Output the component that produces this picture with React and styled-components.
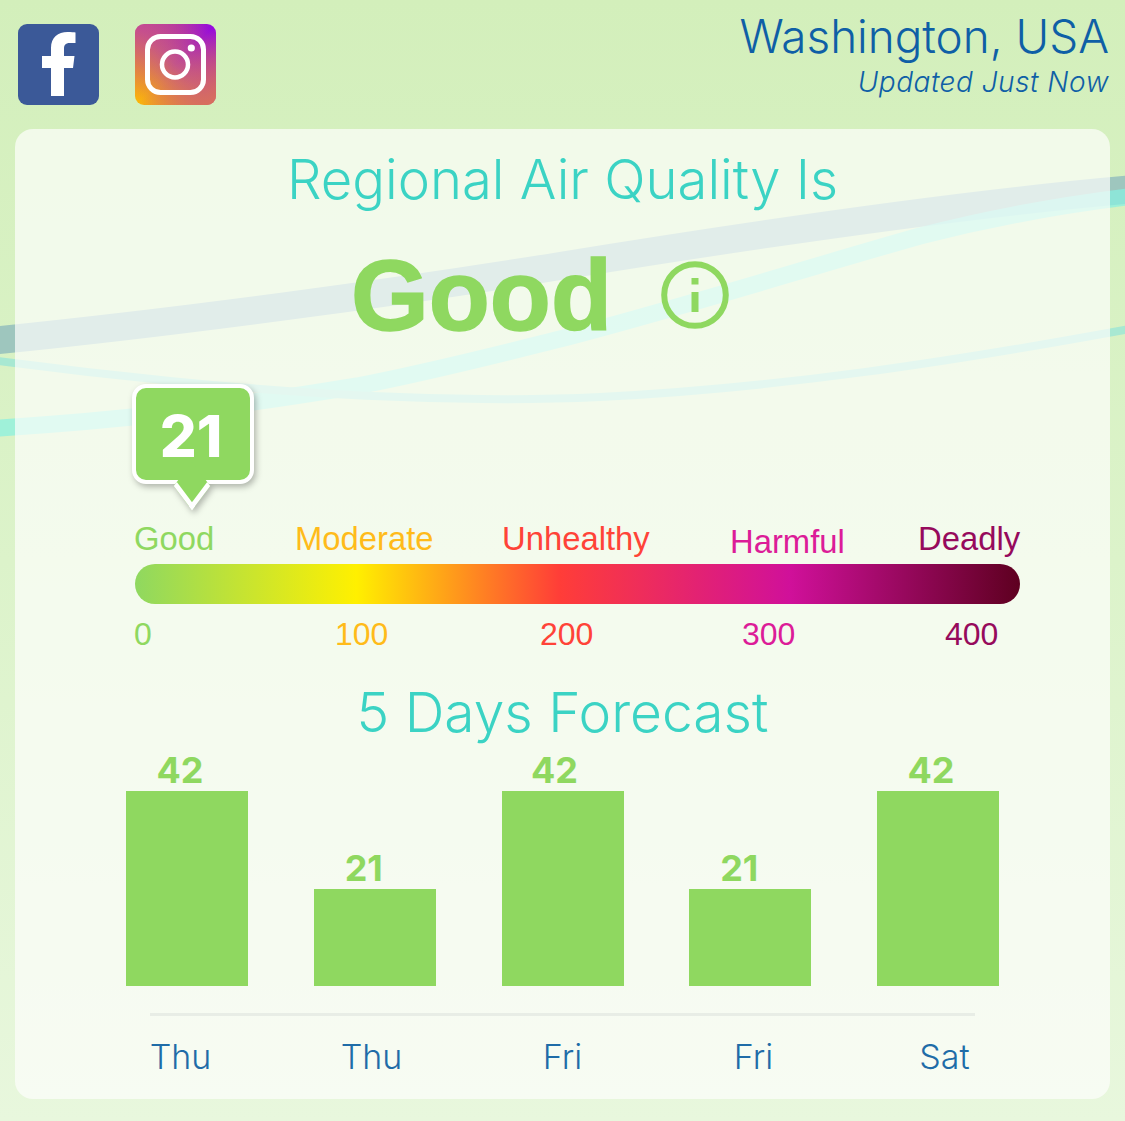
import React from 'react';
import styled, { createGlobalStyle } from 'styled-components';

const GlobalStyle = createGlobalStyle`
  html, body {
    margin: 0;
    padding: 0;
  }
  body {
    font-family: "Liberation Sans", Arial, sans-serif;
  }
`;

const scale = [
  { label: 'Good', color: '#8fd860', width: 161, drop: 0 },
  { label: 'Moderate', color: '#ffbb1a', width: 207, drop: 0 },
  { label: 'Unhealthy', color: '#ff4338', width: 228, drop: 0 },
  { label: 'Harmful', color: '#dc1c98', width: 188, drop: 3 },
  { label: 'Deadly', color: '#960a5c', width: 102, drop: 0 },
];

const ticks = [
  { label: '0', color: '#8fd860', width: 201 },
  { label: '100', color: '#ffbb1a', width: 205 },
  { label: '200', color: '#ff4338', width: 202 },
  { label: '300', color: '#dc1c98', width: 203 },
  { label: '400', color: '#960a5c', width: 60 },
];

const forecast = [
  { day: 'Thu', value: 42, shift: -7 },
  { day: 'Thu', value: 21, shift: -11 },
  { day: 'Fri', value: 42, shift: -8 },
  { day: 'Fri', value: 21, shift: -11 },
  { day: 'Sat', value: 42, shift: -7 },
];

const FacebookIcon = () => (
  <svg width="81" height="81" viewBox="0 0 81 81">
    <rect width="81" height="81" rx="9" fill="#3b5998" />
    <path
      d="M46 72V44H55L56.5 32H46V25C46 21.5 47 19 52 19H57.5V8.5C56.5 8.3 53 8 49.5 8C40 8 33 13.5 33 24V32H24V44H33V72Z"
      fill="#fff"
    />
  </svg>
);

const InstagramIcon = () => (
  <svg width="81" height="81" viewBox="0 0 81 81">
    <defs>
      <linearGradient id="igBase" x1="0" y1="1" x2="1" y2="0">
        <stop offset="0" stopColor="#ffbe00" />
        <stop offset="0.25" stopColor="#e58a3c" />
        <stop offset="0.5" stopColor="#c4558a" />
        <stop offset="0.75" stopColor="#ae2fae" />
        <stop offset="1" stopColor="#9000ea" />
      </linearGradient>
      <linearGradient id="igTint" x1="1" y1="1" x2="0" y2="0">
        <stop offset="0" stopColor="#d9705a" />
        <stop offset="0.5" stopColor="#d9705a" stopOpacity="0" />
        <stop offset="1" stopColor="#c4409c" stopOpacity="0.6" />
      </linearGradient>
    </defs>
    <rect width="81" height="81" rx="9" fill="url(#igBase)" />
    <rect width="81" height="81" rx="9" fill="url(#igTint)" />
    <rect x="12.5" y="12.5" width="56" height="56" rx="13" fill="none" stroke="#fff" strokeWidth="5" />
    <circle cx="40" cy="40.5" r="13" fill="none" stroke="#fff" strokeWidth="4.5" />
    <circle cx="56.3" cy="24" r="3.6" fill="#fff" />
  </svg>
);

const InfoIcon = () => (
  <svg width="68" height="68" viewBox="0 0 68 68">
    <circle cx="34" cy="34" r="30.8" fill="none" stroke="#8fd860" strokeWidth="6" />
    <rect x="30.5" y="17" width="7" height="6.5" fill="#8fd860" />
    <rect x="30.5" y="31" width="7" height="20" fill="#8fd860" />
  </svg>
);

const Waves = () => (
  <WaveLayer viewBox="0 0 1125 1121" width="1125" height="1121">
    <path d="M-10 341C180 322 400 292 560 266S950 205 1135 189" fill="none" stroke="#9ec6be" strokeWidth="28" />
    <path
      d="M-10 428.5C120 421 230 407 357 386C430 372 500 354 560 339C680 308 800 270 920 236C990 218 1060 205 1135 196"
      fill="none"
      stroke="#88f0e0"
      strokeOpacity="0.72"
      strokeWidth="17"
    />
    <path d="M-10 360C80 372 250 392 400 397C480 400 540 400 600 397C780 388 950 362 1135 328" fill="none" stroke="#a8e8d2" strokeWidth="8" />
  </WaveLayer>
);

const App = () => (
  <Page>
    <GlobalStyle />
    <Waves />
    <Header>
      <Socials>
        <FacebookIcon />
        <InstagramIcon />
      </Socials>
      <Location>
        <City>Washington, USA</City>
        <Updated>Updated Just Now</Updated>
      </Location>
    </Header>

    <Card>
      <Title>Regional Air Quality Is</Title>
      <Status>
        <StatusText>Good</StatusText>
        <InfoIcon />
      </Status>

      <Bubble>21</Bubble>

      <ScaleRow>
        {scale.map((item) => (
          <ScaleLabel key={item.label} $color={item.color} $width={item.width} $drop={item.drop}>
            {item.label}
          </ScaleLabel>
        ))}
      </ScaleRow>
      <GradientBar />
      <TickRow>
        {ticks.map((item) => (
          <Tick key={item.label} $color={item.color} $width={item.width}>
            {item.label}
          </Tick>
        ))}
      </TickRow>

      <ForecastTitle>5 Days Forecast</ForecastTitle>
      <Bars>
        {forecast.map((item, i) => (
          <BarColumn key={i}>
            <BarValue $shift={item.shift}>{item.value}</BarValue>
            <Bar $height={item.value === 42 ? 195 : 97} />
          </BarColumn>
        ))}
      </Bars>
      <Axis />
      <Days>
        {forecast.map((item, i) => (
          <Day key={i}>{item.day}</Day>
        ))}
      </Days>
    </Card>
  </Page>
);

export default App;

const Page = styled.div`
  position: relative;
  width: 1125px;
  height: 1121px;
  overflow: hidden;
  background: linear-gradient(180deg, #d3efbb 0%, #dcf3ca 50%, #e8f7dd 100%);
`;

const WaveLayer = styled.svg`
  position: absolute;
  top: 0;
  left: 0;
`;

const Header = styled.header`
  position: relative;
  display: flex;
  justify-content: space-between;
  height: 129px;
  padding: 0 16px 0 18px;
  box-sizing: border-box;
`;

const Socials = styled.div`
  display: flex;
  gap: 36px;
  padding-top: 24px;
`;

const Location = styled.div`
  display: flex;
  flex-direction: column;
  align-items: flex-end;
  padding-top: 10px;
  color: #0f5fa6;
`;

const City = styled.div`
  font-family: Inter, sans-serif;
  font-weight: 300;
  font-size: 45.8px;
  line-height: 54px;
`;

const Updated = styled.div`
  font-family: Inter, sans-serif;
  font-weight: 300;
  font-style: italic;
  font-size: 28px;
  line-height: 37px;
  letter-spacing: 0.5px;
`;

const Card = styled.main`
  position: relative;
  width: 1095px;
  height: 970px;
  margin-left: 15px;
  box-sizing: border-box;
  border-radius: 18px;
  background: rgba(254, 254, 252, 0.7);
  overflow: hidden;
`;

const Title = styled.h1`
  margin: 17px 0 0;
  text-align: center;
  font-family: Inter, sans-serif;
  font-weight: 300;
  font-size: 54.4px;
  line-height: 66px;
  color: #3bd3c4;
`;

const Status = styled.div`
  display: flex;
  align-items: center;
  height: 110px;
  margin: 28px 0 0 336px;
  gap: 49px;
`;

const StatusText = styled.div`
  font-weight: 700;
  font-size: 100px;
  line-height: 110px;
  color: #8fd860;
  -webkit-text-stroke: 1.5px #8fd860;
`;

const Bubble = styled.div`
  position: relative;
  display: flex;
  align-items: center;
  justify-content: center;
  width: 122px;
  height: 100px;
  margin: 34px 0 0 117px;
  padding: 4px 4px 0 0;
  box-sizing: border-box;
  border: 4px solid #fff;
  border-radius: 14px;
  background: #8fd860;
  color: #fff;
  font-family: Inter, sans-serif;
  font-weight: 800;
  font-size: 58px;
  filter: drop-shadow(2px 3px 3px rgba(0, 0, 0, 0.28));

  &::after {
    content: '';
    position: absolute;
    left: 41px;
    bottom: -21px;
    width: 30px;
    height: 30px;
    box-sizing: border-box;
    background: #8fd860;
    border-right: 5px solid #fff;
    border-bottom: 5px solid #fff;
    transform: rotate(45deg) skew(8deg, 8deg);
  }
`;

const ScaleRow = styled.div`
  display: flex;
  margin: 36px 0 0 119px;
  height: 44px;
`;

const ScaleLabel = styled.div`
  flex: none;
  width: ${({ $width }) => $width}px;
  color: ${({ $color }) => $color};
  font-size: 32.8px;
  line-height: 38px;
  margin-top: ${({ $drop }) => $drop}px;
`;

const GradientBar = styled.div`
  width: 885px;
  height: 40px;
  margin-left: 120px;
  border-radius: 20px;
  background: linear-gradient(90deg, #8fd860 0%, #fff000 25%, #ff3d38 48%, #d0109a 74%, #5e0020 100%);
`;

const TickRow = styled.div`
  display: flex;
  margin: 10px 0 0 119px;
`;

const Tick = styled.div`
  flex: none;
  width: ${({ $width }) => $width}px;
  color: ${({ $color }) => $color};
  font-size: 32px;
  line-height: 40px;
`;

const ForecastTitle = styled.h2`
  margin: 25px 0 0;
  text-align: center;
  font-family: Inter, sans-serif;
  font-weight: 300;
  font-size: 55.1px;
  line-height: 66px;
  color: #3bd3c4;
`;

const Bars = styled.div`
  display: flex;
  align-items: flex-end;
  gap: 65.75px;
  height: 234px;
  margin: 7px 0 0 111px;
`;

const BarColumn = styled.div`
  display: flex;
  flex-direction: column;
  align-items: center;
  width: 122px;
`;

const BarValue = styled.div`
  position: relative;
  left: ${({ $shift }) => $shift}px;
  color: #8fd860;
  font-family: Inter, sans-serif;
  font-weight: 700;
  font-size: 36px;
  line-height: 42px;
`;

const Bar = styled.div`
  width: 100%;
  height: ${({ $height }) => $height}px;
  background: #8fd860;
`;

const Axis = styled.div`
  width: 825px;
  height: 3px;
  margin: 27px 0 0 135px;
  background: #e8ede6;
`;

const Days = styled.div`
  display: grid;
  grid-template-columns: repeat(5, 191px);
  margin: 21px 0 0 70px;
`;

const Day = styled.div`
  text-align: center;
  color: #1f6ca8;
  font-family: Inter, sans-serif;
  font-weight: 300;
  font-size: 34px;
  line-height: 40px;
`;
